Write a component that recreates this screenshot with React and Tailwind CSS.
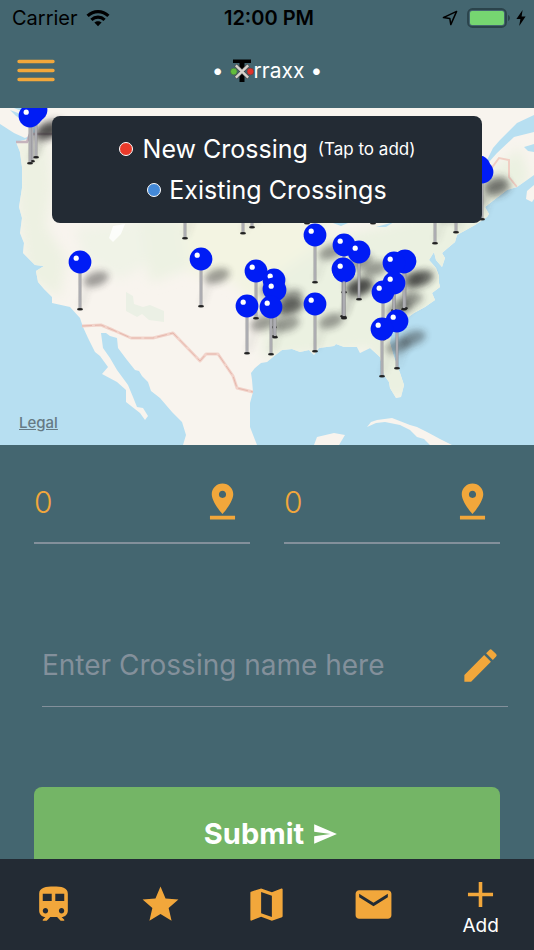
import { MdAdd, MdEdit, MdMail, MdMap, MdPinDrop, MdSend, MdStar } from 'react-icons/md';

const pins = [
  [36, 2], [32, 6], [30, 8], [479, 59], [482, 64],
  [315, 127], [344, 137], [359, 144], [405, 153], [404, 154], [394, 155],
  [201, 151], [80, 154], [343, 161], [344, 163], [344, 162], [256, 163],
  [274, 172], [394, 175], [274, 181], [275, 182], [383, 184], [315, 196],
  [247, 198], [271, 199], [397, 213], [382, 221],
];

// pins whose heads sit behind the legend, only the stems show
const hiddenPins = [
  [185, 83], [243, 78], [252, 72], [307, 68], [332, 66],
  [364, 66], [373, 68], [435, 88], [456, 77],
];

const TrainIcon = ({ className }) => (
  <svg className={className} viewBox="0 0 24 24" fill="currentColor">
    <path d="M12 2c-4 0-8 .5-8 4v9.5C4 17.43 5.57 19 7.5 19L6 20.5v.5h2.23l2-2H14l2 2h2v-.5L16.5 19c1.93 0 3.5-1.57 3.5-3.5V6c0-3.5-3.58-4-8-4zM7.5 17c-.83 0-1.5-.67-1.5-1.5S6.67 14 7.5 14s1.5.67 1.5 1.5S8.33 17 7.5 17zm3.5-7H6V6h5v4zm2 0V6h5v4h-5zm3.5 7c-.83 0-1.5-.67-1.5-1.5s.67-1.5 1.5-1.5 1.5.67 1.5 1.5-.67 1.5-1.5 1.5z" />
  </svg>
);

const tabs = [
  { name: 'Trains', icon: TrainIcon },
  { name: 'Favorites', icon: MdStar },
  { name: 'Map', icon: MdMap },
  { name: 'Mail', icon: MdMail },
];

const Pin = ({ x, y }) => (
  <g transform={`translate(${x} ${y})`}>
    <rect x="-1.4" y="8" width="2.8" height="38.5" fill="url(#stem)" />
    <ellipse cy="47.2" rx="3" ry="1.2" fill="#222" />
    <circle r="11.4" fill="#001cf5" />
    <circle cx="-3.8" cy="-3.8" r="2.6" fill="#fff" />
  </g>
);

const PinShadow = ({ x, y }) => (
  <g transform={`translate(${x} ${y})`} filter="url(#soft)" opacity="0.42">
    <path d="M1 45L8 24" stroke="#333" strokeWidth="3" opacity="0.4" />
    <ellipse cx="16" cy="17" rx="13" ry="7" transform="rotate(-18 16 17)" fill="#222" />
  </g>
);

const CrossingMap = () => (
  <svg
    className="block w-full h-full"
    viewBox="0 0 534 337"
    preserveAspectRatio="xMidYMid slice"
    role="img"
    aria-label="Map of crossings"
  >
    <defs>
      <filter id="soft" x="-50%" y="-50%" width="200%" height="200%">
        <feGaussianBlur stdDeviation="3.5" />
      </filter>
      <filter id="wash" x="-20%" y="-20%" width="140%" height="140%">
        <feGaussianBlur stdDeviation="6" />
      </filter>
      <linearGradient id="stem">
        <stop offset="0" stopColor="#8b8b90" />
        <stop offset="0.5" stopColor="#c0c0c5" />
        <stop offset="1" stopColor="#88888c" />
      </linearGradient>
      <clipPath id="land">
        <path d="M30 0H534V67L517 79L507 82L494 92L485 99L489 106L487 109L475 117L457 127L455 134L449 139L442 145L445 150L442 159L436 152L434 144L429 152L436 160L439 168L439 175L440 179L432 185L435 192L425 199L414 205L400 215L391 225L390 235L394 249L400 265L404 277L401 289L396 290L390 280L389 274L384 267L380 249L370 240L360 245L357 239L344 239L336 236L334 238L319 240L314 247L309 242L300 244L292 241L282 242L273 249L267 254L261 255L255 260L251 265L252 272L253 284L250 295L250 319L257 337H183L186 327L182 314L172 304L160 290L151 283L148 274L142 268L139 263L135 262L127 252L118 240L117 230L110 228L106 225L101 225L103 240L110 250L117 262L128 277L133 289L137 299L143 300L148 308L145 312L140 305L126 294L126 282L117 274L102 266L108 259L100 248L95 244L88 230L83 219L80 210L70 199L52 195L52 189L44 181L38 174L36 163L44 158L35 157L23 145L24 135L20 125L22 110L19 99L22 80L22 59L20 44L16 34L28 31Z" />
      </clipPath>
    </defs>

    <rect width="534" height="337" fill="#b7dff1" />
    <g clipPath="url(#land)">
      <rect width="534" height="337" fill="#f8f4ee" />
      <g filter="url(#wash)">
        <path d="M16 30L48 34L52 80L46 118L66 150L60 190L28 170L18 100Z" fill="#edf1e2" />
        <path d="M75 120L150 112L165 145L120 172L84 150Z" fill="#f0f3e7" />
        <path d="M140 110L205 112L190 160L150 175Z" fill="#edf2e3" />
        <path d="M180 110H330L320 235L265 250L256 200L235 175L190 165Z" fill="#f3f4e2" />
        <path d="M265 175L330 130L440 105L520 40L530 70L460 150L440 205L410 290H380L370 240L262 250Z" fill="#ebf1e1" />
      </g>
      <path d="M126 184L133 188L134 196L143 199L150 197L164 203L164 214L149 212L142 206L137 209L126 203Z" fill="#ebf0e5" />
      <path d="M113 118L125 116L121 126L113 134L109 130Z" fill="#fff" opacity="0.8" />
      <path d="M487 52L493 40L500 32L517 15L534 7V24L514 29L497 45L489 54Z" fill="#b7dff1" />
      <path d="M524 39L534 36V44L528 43Z" fill="#b7dff1" />
      <path d="M333 115H348L341 118ZM376 119L394 114L386 119Z" fill="#b7dff1" />
      <path d="M30 0L36 13L35 27L28 29L24 18L18 8V0Z" fill="#b7dff1" />
      <path d="M488 65L499 50L509 52V69L517 79" fill="none" stroke="#f0cec3" strokeWidth="2" />
    </g>
    <path d="M0 0H14L24 4L32 16L33 26L27 29L25 30L14 25L0 16Z" fill="#f8f4ee" />
    <path d="M10 2L18 5L24 12L16 8Z" fill="#b7dff1" />
    <path d="M16 34H27L30 26L60 26" fill="none" stroke="#c5b4bd" strokeWidth="2.5" />
    <path d="M534 77L527 83L526 91L532 94L534 91Z" fill="#f8f4ee" />
    <path d="M367 319L371 314L377 312L392 310L410 317L417 319L427 324L440 331L452 337H430L424 331L417 329L410 322L400 317L385 314L376 315Z" fill="#f8f4ee" />
    <path d="M314 337L317 329L334 325L345 327L339 337Z" fill="#f8f4ee" />
    <path
      d="M82 218L101 217L113 222L131 230H153L173 225L200 253L206 246H218L233 268L237 280L253 284"
      fill="none"
      stroke="#f2d3ca"
      strokeWidth="3"
      strokeLinejoin="round"
    />
    <path
      d="M82 218L101 217L113 222L131 230H153L173 225L200 253L206 246H218L233 268L237 280L253 284"
      fill="none"
      stroke="#e6b8ad"
      strokeWidth="1"
      strokeDasharray="10 3"
    />

    {[...hiddenPins, ...pins].map(([x, y], i) => <PinShadow key={i} x={x} y={y} />)}
    {[...hiddenPins, ...pins].map(([x, y], i) => <Pin key={i} x={x} y={y} />)}
  </svg>
);

const StatusBar = () => (
  <div className="grid grid-cols-3 items-center h-9 pl-3 pr-2 text-black text-[20px] leading-6">
    <div className="flex items-center gap-2">
      <span>Carrier</span>
      <svg className="w-6 h-[18px]" viewBox="0 0 24 18" fill="none" stroke="#000" strokeWidth="3.2">
        <path d="M1.6 6.8C7.4 1.1 16.6 1.1 22.4 6.8" />
        <path d="M5.4 10.8C9.2 7.2 14.8 7.2 18.6 10.8" />
        <path d="M8.4 13.6C10.5 11.7 13.5 11.7 15.6 13.6L12 17.2Z" fill="#000" stroke="none" />
      </svg>
    </div>
    <span className="text-center font-semibold whitespace-nowrap">12:00 PM</span>
    <div className="flex items-center justify-end">
      <svg className="w-4 h-4 mr-2" viewBox="0 0 16 16" fill="none" stroke="#000" strokeWidth="1.5" strokeLinejoin="round">
        <path d="M14.6 1.4L1.4 7.6L7.8 8.4L8.8 14.6Z" />
      </svg>
      <svg className="w-[46px] h-5 mr-1" viewBox="0 0 46 20">
        <rect x="2" y="1" width="38" height="18" rx="4.5" fill="none" stroke="#2b434b" strokeWidth="1.8" />
        <rect x="4" y="3" width="34" height="14" rx="2" fill="#76d671" />
        <path d="M42 7C44.6 7.8 44.6 12.2 42 13Z" fill="#2b434b" />
      </svg>
      <svg className="w-[10px] h-4" viewBox="0 0 10 16">
        <path d="M6.6 0L0.4 9H4.4L3.2 16L9.6 6.6H5.6Z" fill="#000" />
      </svg>
    </div>
  </div>
);

const Logo = () => (
  <svg className="w-6 h-6" viewBox="0 0 24 24">
    <path d="M3 0.5H21V4H14.5V23H9.5V4H3Z" fill="#000" />
    <path d="M5.5 6L18.5 19M18.5 6L5.5 19" stroke="#4b4b4b" strokeWidth="3.6" />
    <path d="M5.8 6.3L18.2 18.7M18.2 6.3L5.8 18.7" stroke="#d6d2cc" strokeWidth="2.4" />
    <circle cx="3.8" cy="12.5" r="3.4" fill="#62bd3c" stroke="#3f5a48" strokeWidth="0.6" />
    <circle cx="20.4" cy="12.5" r="3.4" fill="#e1322b" stroke="#5a3e40" strokeWidth="0.6" />
  </svg>
);

const CoordinateField = ({ label }) => (
  <div className="flex-1 min-w-0 flex items-center h-[63px] pb-5 pr-[6px] border-b-2 border-[#83909b]">
    <input
      aria-label={label}
      defaultValue="0"
      className="flex-1 min-w-0 bg-transparent text-[30px] leading-10 font-light text-[#f2a73b] outline-none"
    />
    <MdPinDrop className="w-[43px] h-[43px] shrink-0 text-[#f2a73b]" />
  </div>
);

const App = () => {
  return (
    <div className="flex flex-col h-screen bg-[#446670] font-['Inter','Liberation_Sans',sans-serif]">
      <StatusBar />

      {/* Header */}
      <header className="grid grid-cols-[1fr_auto_1fr] items-center h-[72px] px-4 pb-[2px] shrink-0">
        <button aria-label="Menu" className="justify-self-start">
          <svg className="w-10 h-6" viewBox="0 0 40 24" stroke="#f2a73b" strokeWidth="3.4" strokeLinecap="round">
            <path d="M3 2.5H37M3 11.5H37M3 20.5H37" />
          </svg>
        </button>
        <h1 className="flex items-center text-[21px] leading-7 text-white">
          <span className="mr-[6px]">•</span>
          <Logo />
          <span>rraxx •</span>
        </h1>
      </header>

      {/* Map */}
      <section className="relative h-[337px] shrink-0 overflow-hidden">
        <CrossingMap />
        <div className="absolute top-2 inset-x-[52px] flex flex-col items-center gap-[5px] rounded-lg bg-[#232b34] px-4 py-[15px] text-white">
          <div className="flex items-center gap-[10px] text-[25px] leading-9">
            <span className="w-[14px] h-[14px] rounded-full border border-white bg-[#ea3a2a]" />
            <span>New Crossing</span>
            <span className="text-[17px]">(Tap to add)</span>
          </div>
          <div className="flex items-center gap-2 text-[25px] leading-9">
            <span className="w-[14px] h-[14px] rounded-full border border-white bg-[#4389d8]" />
            <span>Existing Crossings</span>
          </div>
        </div>
        <a href="#legal" className="absolute left-[19px] bottom-3 text-[15px] leading-5 font-medium text-[#667a84] underline">
          Legal
        </a>
      </section>

      {/* New crossing form */}
      <form className="flex-1 min-h-0 overflow-y-auto [scrollbar-width:none] pt-9">
        <div className="flex gap-[34px] px-[34px]">
          <CoordinateField label="Latitude" />
          <CoordinateField label="Longitude" />
        </div>
        <div className="mt-[100px] ml-[42px] mr-[26px] flex items-center h-[63px] pb-5 pr-[6px] border-b border-[#83909b]">
          <input
            aria-label="Crossing name"
            placeholder="Enter Crossing name here"
            className="flex-1 min-w-0 bg-transparent text-[28px] leading-10 text-[#f2a73b] placeholder:text-[#83909b] outline-none"
          />
          <MdEdit className="w-[43px] h-[43px] shrink-0 text-[#f2a73b]" />
        </div>
        <div className="px-[34px] pt-20 pb-8">
          <button
            type="button"
            className="flex w-full items-center justify-center gap-2 h-[94px] pl-2 rounded-lg bg-[#74b566] text-[29px] font-bold text-white"
          >
            Submit
            <MdSend className="w-[26px] h-[26px]" />
          </button>
        </div>
      </form>

      {/* Tab bar */}
      <nav className="grid grid-cols-5 items-center h-[91px] shrink-0 bg-[#232b34] text-[#f2a73b]">
        {tabs.map(({ name, icon: Icon }) => (
          <button key={name} aria-label={name} className="flex justify-center">
            <Icon className="w-[43px] h-[43px]" />
          </button>
        ))}
        <button className="flex flex-col items-center">
          <MdAdd className="w-[43px] h-[43px]" />
          <span className="text-[19px] leading-5 text-white">Add</span>
        </button>
      </nav>
    </div>
  );
};

export default App;
